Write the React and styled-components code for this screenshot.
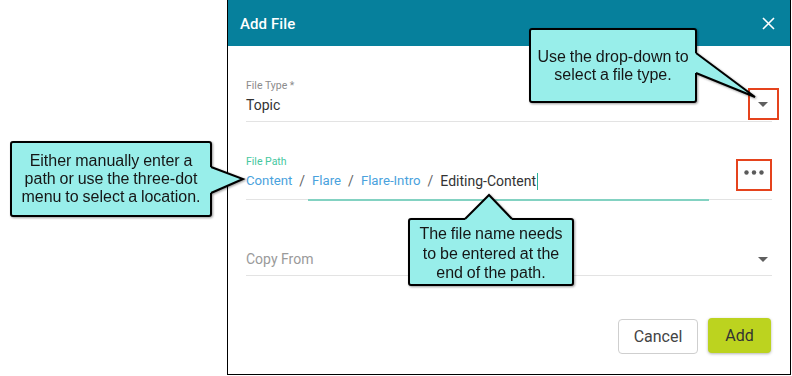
import React from 'react';
import styled, { createGlobalStyle } from 'styled-components';

const Global = createGlobalStyle`
  html, body { margin: 0; padding: 0; background: #fff; }
  body { font-family: Roboto, "Liberation Sans", Arial, sans-serif; }
  * { box-sizing: border-box; }
`;

const Page = styled.div`
  position: relative;
  width: 792px;
  height: 376px;
  overflow: hidden;
  background: #fff;
  display: flex;
`;

const Dialog = styled.div`
  margin-left: 227px;
  width: 564px;
  height: 375px;
  border: 1px solid #000;
  border-top: none;
  display: flex;
  flex-direction: column;
  background: #fff;
`;

const Header = styled.header`
  height: 46px;
  flex: none;
  background: #06809c;
  display: flex;
  align-items: center;
  justify-content: space-between;
  padding: 0 15px 0 12px;
`;

const Title = styled.h1`
  margin: 1px 0 0;
  font-size: 15px;
  font-weight: 500;
  color: #fff;
  letter-spacing: 0.1px;
`;

const CloseButton = styled.button`
  border: none;
  background: none;
  padding: 0;
  width: 13px;
  height: 13px;
  display: flex;
  align-items: center;
  justify-content: center;
  margin-top: 1px;
`;

const Body = styled.div`
  flex: 1;
  display: flex;
  flex-direction: column;
  padding: 33px 18px 0;
`;

const Field = styled.div`
  position: relative;
  display: flex;
  align-items: center;
  border-bottom: 1px solid #e3e3e3;
  margin-top: ${(p) => p.$mt || 0}px;
  padding-bottom: ${(p) => p.$pb}px;
`;

const FieldMain = styled.div`
  flex: 1;
  display: flex;
  flex-direction: column;
`;

const Label = styled.div`
  font-size: 10.5px;
  line-height: 13px;
  height: 13px;
  margin-bottom: 3px;
  color: ${(p) => (p.$active ? '#45c7a0' : '#8c8c8c')};
`;

const ValueRow = styled.div`
  display: flex;
  align-items: center;
  height: 20px;
  font-size: 14px;
  line-height: 20px;
  color: ${(p) => (p.$placeholder ? '#9a9a9a' : '#333')};
  white-space: nowrap;
`;

const Crumb = styled.span`
  color: #4aa2dd;
  font-size: 13.2px;
`;

const Sep = styled.span`
  color: #666;
  margin: 0 7px;
`;

const Caret = styled.span`
  width: 1px;
  height: 17px;
  background: #2ab39a;
  margin-left: 1px;
`;

const FocusBar = styled.div`
  position: absolute;
  left: 62px;
  width: 401px;
  bottom: -1.5px;
  height: 2px;
  background: #83d2c2;
`;

const IconButton = styled.button`
  border: none;
  background: none;
  padding: 0;
  margin-right: ${(p) => p.$mr}px;
  align-self: ${(p) => p.$self || 'auto'};
  margin-bottom: ${(p) => p.$mb || 0}px;
  display: flex;
  align-items: center;
  justify-content: center;
`;

const Footer = styled.div`
  display: flex;
  justify-content: flex-end;
  align-items: center;
  gap: 10px;
  margin-top: 43px;
  padding-right: 1px;
`;

const Button = styled.button`
  height: 35px;
  width: ${(p) => p.$w}px;
  border-radius: 4px;
  font-family: Roboto, sans-serif;
  font-size: 16px;
  cursor: pointer;
  border: ${(p) => (p.$primary ? 'none' : '1px solid #cfcfcf')};
  background: ${(p) => (p.$primary ? '#bcd31f' : '#fff')};
  color: ${(p) => (p.$primary ? '#333' : '#444')};
  box-shadow: ${(p) => (p.$primary ? '0 1px 3px rgba(0,0,0,0.3)' : 'none')};
  transform: translateY(${(p) => (p.$primary ? -1 : 0)}px);
`;

const Highlight = styled.div`
  position: absolute;
  left: ${(p) => p.$x}px;
  top: ${(p) => p.$y}px;
  width: ${(p) => p.$w}px;
  height: ${(p) => p.$h}px;
  border: 2px solid #e5431d;
  pointer-events: none;
`;

const CalloutBox = styled.div`
  position: absolute;
  left: ${(p) => p.$x}px;
  top: ${(p) => p.$y}px;
  width: ${(p) => p.$w}px;
  height: ${(p) => p.$h}px;
  padding-top: ${(p) => p.$pt || 0}px;
  background: #98eeea;
  border: 2px solid #000;
  border-radius: 3px;
  filter: drop-shadow(1.5px 1.5px 1px rgba(0, 0, 0, 0.4));
  display: flex;
  flex-direction: column;
  align-items: center;
  justify-content: center;
  font-family: "Liberation Sans", Arial, sans-serif;
  font-size: 16px;
  line-height: ${(p) => p.$lh}px;
  word-spacing: -0.6px;
  color: #161616;
  text-align: center;
  white-space: nowrap;
`;

const PointerSvg = styled.svg`
  position: absolute;
  left: -2px;
  top: -2px;
  overflow: visible;
`;

function Callout({ x, y, w, h, lh = 18, pt = 0, side, a, b, tip, lines }) {
  let fill;
  let stroke;
  if (side === 'right') {
    fill = `${w - 4},${a} ${w - 1},${a} ${tip[0]},${tip[1]} ${w - 1},${b} ${w - 4},${b}`;
    stroke = `${w - 1},${a} ${tip[0]},${tip[1]} ${w - 1},${b}`;
  } else {
    fill = `${a},4 ${a},1 ${tip[0]},${tip[1]} ${b},1 ${b},4`;
    stroke = `${a},1 ${tip[0]},${tip[1]} ${b},1`;
  }
  return (
    <CalloutBox $x={x} $y={y} $w={w} $h={h} $lh={lh} $pt={pt}>
      <PointerSvg width={w} height={h}>
        <polygon points={fill} fill="#98eeea" />
        <polyline points={stroke} fill="none" stroke="#000" strokeWidth="2" strokeLinejoin="miter" />
      </PointerSvg>
      {lines.map((l) => (
        <div key={l}>{l}</div>
      ))}
    </CalloutBox>
  );
}

const DropCaret = () => (
  <svg width="10" height="5" viewBox="0 0 10 5">
    <polygon points="0,0 10,0 5,5" fill="#5f5f5f" />
  </svg>
);

const Dots = () => (
  <svg width="20" height="5" viewBox="0 0 20 5">
    <circle cx="2.5" cy="2.5" r="2.2" fill="#5a5a5a" />
    <circle cx="10" cy="2.5" r="2.2" fill="#5a5a5a" />
    <circle cx="17.5" cy="2.5" r="2.2" fill="#5a5a5a" />
  </svg>
);

export default function App() {
  return (
    <Page>
      <Global />
      <Dialog>
        <Header>
          <Title>Add File</Title>
          <CloseButton aria-label="Close">
            <svg width="13" height="13" viewBox="0 0 13 13">
              <path d="M1 1 L12 12 M12 1 L1 12" stroke="#fff" strokeWidth="1.6" />
            </svg>
          </CloseButton>
        </Header>
        <Body>
          <Field $pb={6}>
            <FieldMain>
              <Label>File Type *</Label>
              <ValueRow>Topic</ValueRow>
            </FieldMain>
            <IconButton $mr={4} $self="flex-end" $mb={8}>
              <DropCaret />
            </IconButton>
          </Field>
          <Field $mt={33} $pb={8}>
            <FieldMain>
              <Label $active>File Path</Label>
              <ValueRow>
                <Crumb>Content</Crumb>
                <Sep>/</Sep>
                <Crumb>Flare</Crumb>
                <Sep>/</Sep>
                <Crumb>Flare-Intro</Crumb>
                <Sep>/</Sep>
                <span>Editing-Content</span>
                <Caret />
              </ValueRow>
            </FieldMain>
            <IconButton $mr={8} $mb={2}>
              <Dots />
            </IconButton>
            <FocusBar />
          </Field>
          <Field $mt={49} $pb={6}>
            <FieldMain>
              <ValueRow $placeholder>Copy From</ValueRow>
            </FieldMain>
            <IconButton $mr={4}>
              <DropCaret />
            </IconButton>
          </Field>
          <Footer>
            <Button $w={80}>Cancel</Button>
            <Button $w={63} $primary>Add</Button>
          </Footer>
        </Body>
      </Dialog>

      <Highlight $x={748} $y={88} $w={31} $h={32} />
      <Highlight $x={736} $y={159} $w={36} $h={32} />

      <Callout
        x={529}
        y={28}
        w={168}
        h={75}
        side="right"
        a={25}
        b={45}
        tip={[226, 69]}
        lines={['Use the drop-down to', 'select a file type.']}
      />
      <Callout
        x={10}
        y={141}
        w={202}
        h={76}
        side="right"
        a={26}
        b={52}
        tip={[233, 38]}
        lines={['Either manually enter a', 'path or use the three-dot', 'menu to select a location.']}
      />
      <Callout
        x={408}
        y={218}
        w={166}
        h={68}
        lh={19.5}
        pt={3}
        side="top"
        a={57}
        b={104}
        tip={[81, -23]}
        lines={['The file name needs', 'to be entered at the', 'end of the path.']}
      />
    </Page>
  );
}
